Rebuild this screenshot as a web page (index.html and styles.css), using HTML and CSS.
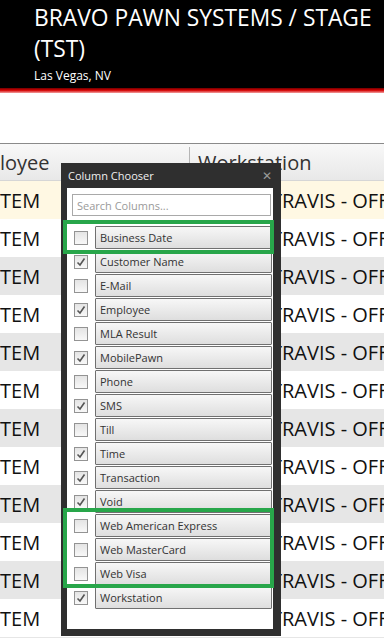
FILE: index.html
```html
<!DOCTYPE html>
<html lang="en">
<head>
    <meta charset="UTF-8">
    <meta name="viewport" content="width=device-width, initial-scale=1.0">
    <title>Bravo Pawn Systems</title>
    <link rel="stylesheet" href="styles.css">
</head>
<body>
    <!-- top banner -->
    <header class="banner">
        <div class="banner-title">BRAVO PAWN SYSTEMS / STAGE (TST)</div>
        <div class="banner-sub">Las Vegas, NV</div>
    </header>
    <div class="banner-line"></div>

    <!-- grid -->
    <div class="grid">
        <div class="grid-row grid-head">
            <div class="cell cell-emp">loyee</div>
            <div class="cell cell-ws">Workstation</div>
        </div>
        <div class="grid-rows" id="rows"></div>
    </div>

    <!-- column chooser popup -->
    <div class="chooser">
        <div class="chooser-title">
            <span>Column Chooser</span>
            <span class="chooser-close">&#x2715;</span>
        </div>
        <div class="chooser-body">
            <input type="text" class="chooser-search" placeholder="Search Columns...">
            <ul class="chooser-list" id="columns"></ul>
        </div>
    </div>

    <!-- highlight boxes -->
    <div class="mark mark-top"></div>
    <div class="mark mark-bottom"></div>

    <script>
        // grid rows
        const rows = document.getElementById("rows");
        for (let i = 0; i < 13; i++) {
            const row = document.createElement("div");
            row.className = "grid-row" + (i === 0 ? " selected" : (i % 2 === 0 ? " alt" : ""));
            row.innerHTML = '<div class="cell cell-emp">TEM</div><div class="cell cell-ws">TRAVIS - OFFICE</div>';
            rows.appendChild(row);
        }

        // column list
        const columns = [
            ["Business Date", false],
            ["Customer Name", true],
            ["E-Mail", false],
            ["Employee", true],
            ["MLA Result", false],
            ["MobilePawn", true],
            ["Phone", false],
            ["SMS", true],
            ["Till", false],
            ["Time", true],
            ["Transaction", true],
            ["Void", true],
            ["Web American Express", false],
            ["Web MasterCard", false],
            ["Web Visa", false],
            ["Workstation", true]
        ];
        const check = '<svg width="12" height="12" viewBox="0 0 12 12"><path d="M2.5 6.5 L5 9 L9.5 2.5" fill="none" stroke="#555" stroke-width="1.6"/></svg>';
        const list = document.getElementById("columns");
        columns.forEach(function (c) {
            const li = document.createElement("li");
            li.className = "chooser-item";
            li.innerHTML = '<span class="box">' + (c[1] ? check : '') + '</span><span class="col-btn">' + c[0] + '</span>';
            list.appendChild(li);
        });
    </script>
</body>
</html>
```

FILE: styles.css
```css
/* page */
body {
    margin: 0;
    width: 384px;
    height: 638px;
    overflow: hidden;
    position: relative;
    background-color: #fff;
    font-family: "Open Sans", "Noto Sans", sans-serif;
    color: #111;
}

/* banner */
.banner {
    background-color: #000;
    color: #fff;
    padding: 2px 6px 3px 34px;
    height: 83px;
}

.banner-title {
    font-size: 22.8px;
    line-height: 31px;
}

.banner-sub {
    font-size: 12px;
    line-height: 18px;
    margin-top: 3px;
}

.banner-line {
    height: 5px;
    background: linear-gradient(#6e0000, #d40000 45%, #f3a0a0);
}

/* grid */
.grid {
    margin-top: 50px;
    border-top: 1px solid #8a8a8a;
    height: 494px;
    overflow: hidden;
}

.grid-row {
    display: flex;
    height: 38px;
    line-height: 40px;
    font-size: 20px;
    background-color: #fff;
}

.grid-row.alt {
    background-color: #e6e6e6;
}

.grid-row.selected {
    background-color: #fff8e3;
}

.grid-head {
    height: 36px;
    line-height: 38px;
    background: linear-gradient(#f8f8f8, #e8e8e8);
    color: #333;
    border-bottom: 1px solid #d6d6d6;
}

.cell {
    white-space: nowrap;
    overflow: hidden;
}

.cell-emp {
    width: 189px;
}

.cell-ws {
    flex: 1;
    padding-left: 8px;
}

.grid-head .cell-ws {
    border-left: 1px solid #b5b5b5;
    margin: 3px 0;
    line-height: 32px;
}

.grid-rows .cell-ws {
    padding-left: 82px;
}

/* column chooser */
.chooser {
    position: absolute;
    left: 61px;
    top: 163px;
    width: 220px;
    height: 473px;
    background-color: #2f2f2f;
    display: flex;
    flex-direction: column;
}

.chooser-title {
    height: 25px;
    display: flex;
    justify-content: space-between;
    align-items: center;
    padding: 0 9px 0 7px;
    color: #f0f0f0;
    font-size: 11px;
}

.chooser-close {
    color: #9a9a9a;
    font-size: 12px;
}

.chooser-body {
    flex: 1;
    margin: 0 8px 7px 6px;
    background-color: #fff;
    padding: 6px 2px 0 5px;
}

.chooser-search {
    display: block;
    box-sizing: border-box;
    width: 199px;
    height: 22px;
    border: 1px solid #a9a9a9;
    padding: 0 4px;
    font-family: inherit;
    font-size: 11px;
    color: #333;
}

.chooser-search::placeholder {
    color: #9a9a9a;
}

.chooser-list {
    list-style: none;
    margin: 10px 0 0 -5px;
    padding: 0;
}

.chooser-item {
    display: flex;
    align-items: center;
    height: 23px;
    margin-bottom: 1px;
    padding-left: 7px;
}

.box {
    box-sizing: border-box;
    width: 14px;
    height: 14px;
    border: 1px solid #939393;
    background: linear-gradient(#e4e4e4, #f8f8f8);
    display: flex;
    align-items: center;
    justify-content: center;
}

.col-btn {
    box-sizing: border-box;
    flex: 1;
    height: 23px;
    margin: 0 -1px 0 7px;
    border: 1px solid #707070;
    border-radius: 1px;
    background: linear-gradient(#f7f7f7, #dedede);
    font-size: 11px;
    line-height: 21px;
    padding-left: 4px;
    color: #333;
    white-space: nowrap;
}

/* green highlight boxes */
.mark {
    position: absolute;
    left: 63px;
    width: 211px;
    box-sizing: border-box;
    border: 4px solid #28a64a;
}

.mark-top {
    top: 220px;
    height: 34px;
}

.mark-bottom {
    top: 508px;
    height: 80px;
}
```
